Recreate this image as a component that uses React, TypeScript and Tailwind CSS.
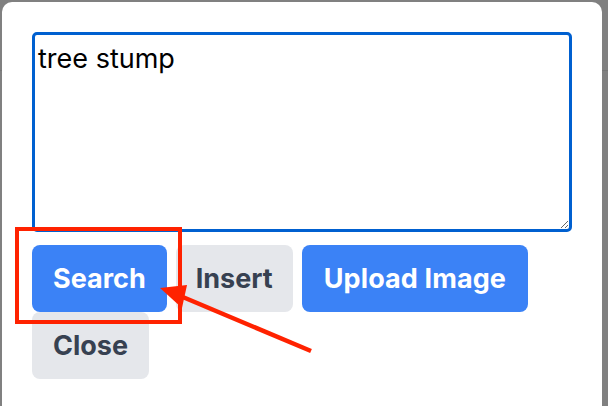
export default function App() {
  return (
    <div className="relative w-[608px] h-[406px] overflow-hidden bg-[#808080] font-['Inter',sans-serif]">
      {/* page line under the overlay */}
      <div className="absolute left-0 right-0 top-[70px] h-px bg-[#767676]" />

      {/* Modal */}
      <div className="relative ml-[2px] mt-[2px] w-[600px] h-[440px] rounded-[10px] bg-white p-[30px]">
        <textarea
          defaultValue="tree stump"
          className="block w-[540px] h-[200px] rounded-[5px] border-[3.5px] border-[#0060d0] pl-[3px] pt-[8px] text-[27px] leading-[32px] text-black outline-none font-['Inter',sans-serif]"
        />

        <div className="mt-[13px] flex flex-wrap gap-x-[9px] w-[540px]">
          <button className="rounded-[8px] bg-[#3b82f6] px-[21px] py-[15px] text-[27px] leading-[37px] font-bold text-white">
            Search
          </button>
          <button className="rounded-[8px] bg-[#e5e7eb] px-[20px] py-[15px] text-[27px] leading-[37px] font-bold text-[#374151]">
            Insert
          </button>
          <button className="rounded-[8px] bg-[#3b82f6] px-[22px] py-[15px] text-[27px] leading-[37px] font-bold text-white tracking-[0.1px]">
            Upload Image
          </button>
          <button className="rounded-[8px] bg-[#e5e7eb] px-[21px] py-[15px] text-[27px] leading-[37px] font-bold text-[#374151]">
            Close
          </button>
        </div>
      </div>

      {/* Red annotation */}
      <svg
        className="absolute left-0 top-0 pointer-events-none"
        width="608"
        height="406"
        viewBox="0 0 608 406"
      >
        <rect x="17" y="229" width="163" height="93" fill="none" stroke="#ff2200" strokeWidth="4" />
        <line x1="311" y1="351" x2="178" y2="295" stroke="#ff2200" strokeWidth="4.5" strokeLinecap="butt" />
        <polygon points="160,288 187,285 182,308" fill="#ff2200" />
      </svg>
    </div>
  );
}
